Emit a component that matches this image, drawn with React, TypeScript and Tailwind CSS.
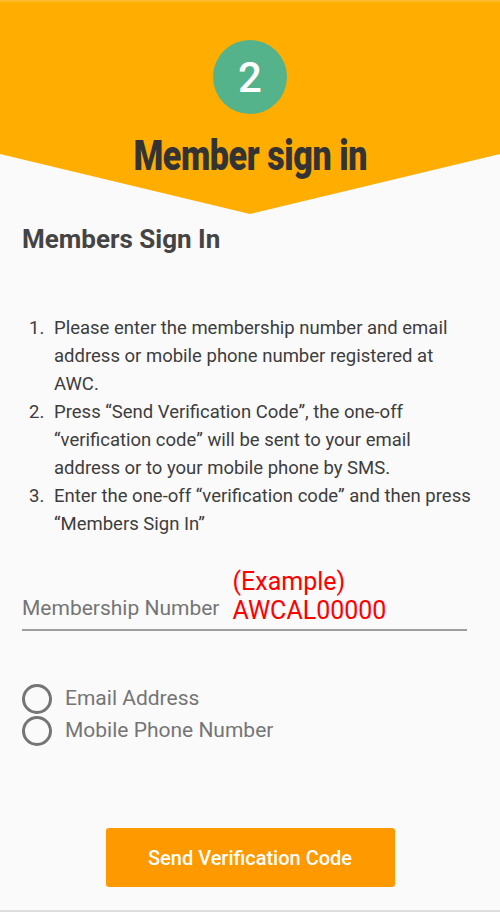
const steps = [
  "Please enter the membership number and email address or mobile phone number registered at AWC.",
  "Press \u201cSend Verification Code\u201d, the one-off \u201cverification code\u201d will be sent to your email address or to your mobile phone by SMS.",
  "Enter the one-off \u201cverification code\u201d and then press \u201cMembers Sign In\u201d",
];

function Radio({ label }: { label: string }) {
  return (
    <label className="flex items-center gap-[13px] h-[32px]">
      <span className="size-[30px] rounded-full border-[3px] border-[#757575]" />
      <span className="text-[21px] text-[#757575]">{label}</span>
    </label>
  );
}

export default function App() {
  return (
    <div className="min-h-[912px] w-[500px] bg-[#fafafa] font-['Roboto',sans-serif] border-b-2 border-[#dddddd]">
      <div className="h-[214px] bg-[#ffae00] border-t-2 border-[#ffb829] flex flex-col items-center pt-[38px] [clip-path:polygon(0_0,100%_0,100%_154px,50%_214px,0_154px)]">
        <div className="size-[74px] rounded-full bg-[#55b38c] flex items-center justify-center text-white text-[42px] font-medium">
          2
        </div>
        <h1 className="mt-[18px] text-[42px] leading-[48px] font-black text-[#333333] font-['Roboto',sans-serif] scale-x-[0.81] tracking-[-0.5px] whitespace-nowrap">
          Member sign in
        </h1>
      </div>

      <div className="px-[22px]">
        <h2 className="mt-[10px] text-[26px] font-bold text-[#444444] leading-[30px]">Members Sign In</h2>

        <ol className="mt-[60px] pl-[7px] text-[18.5px] leading-[28px] text-[#3d3d3d]">
          {steps.map((s, i) => (
            <li key={i} className="flex">
              <span className="w-[25px] shrink-0">{i + 1}.</span>
              <span>{s}</span>
            </li>
          ))}
        </ol>

        <div className="mt-[29px] w-[445px] border-b-2 border-[#9e9e9e] flex items-end pb-[8px]">
          <span className="text-[21px] text-[#757575] leading-[26px]">Membership Number</span>
          <div className="ml-[13px] text-[25px] text-[#ff0000] leading-[29px]">
            <div>(Example)</div>
            <div className="-mb-[4px]">AWCAL00000</div>
          </div>
        </div>

        <div className="mt-[52px] flex flex-col">
          <Radio label="Email Address" />
          <Radio label="Mobile Phone Number" />
        </div>

        <div className="mt-[81px] flex justify-center">
          <button className="w-[289px] h-[59px] rounded-[3px] bg-[#ff9900] text-white text-[20px] font-medium">
            Send Verification Code
          </button>
        </div>
      </div>
    </div>
  );
}
